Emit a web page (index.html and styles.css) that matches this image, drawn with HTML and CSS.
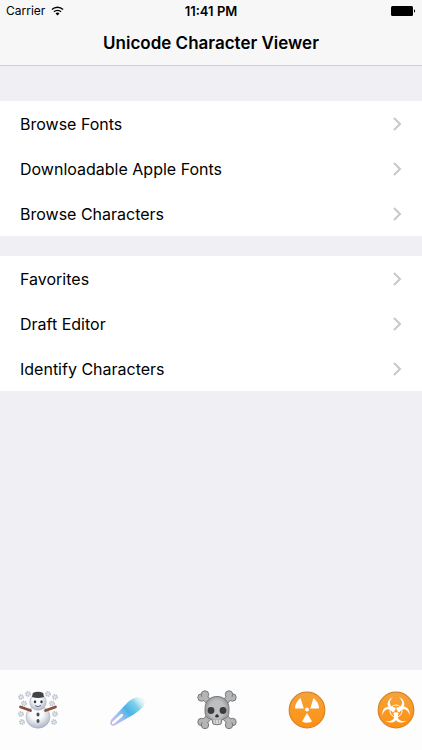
FILE: index.html
```
<!DOCTYPE html>
<html lang="en">
<head>
  <meta charset="UTF-8" />
  <meta name="viewport" content="width=device-width, initial-scale=1.0"/>
  <title>Unicode Character Viewer</title>
  <link rel="stylesheet" href="styles.css">
</head>
<body>

  <header class="header">
    <div class="status-bar">
      <div class="status-left">
        <span>Carrier</span>
        <svg class="wifi" viewBox="0 0 14 10" aria-hidden="true">
          <path d="M1 3.500a8.400 8.400 0 0 1 12 0M3.200 5.900a5.300 5.300 0 0 1 7.600 0" fill="none" stroke="#000" stroke-width="1.500"/>
          <path d="M7 9.800 4.900 7.600a3 3 0 0 1 4.200 0z"/>
        </svg>
      </div>
      <span class="time">11:41 PM</span>
      <div class="status-right">
        <svg class="battery" viewBox="0 0 25 10" aria-hidden="true">
          <rect x="0" y="0" width="22" height="10" rx="1.5"/>
          <path d="M23 3.200a2 2 0 0 1 0 3.600z"/>
        </svg>
      </div>
    </div>
    <h1 class="title">Unicode Character Viewer</h1>
  </header>

  <main class="content">
    <nav class="group">
      <a class="row" href="#fonts">Browse Fonts
        <svg class="chevron" viewBox="0 0 9 14" aria-hidden="true"><path d="M1 1l6 6-6 6"/></svg></a>
      <a class="row" href="#downloadable">Downloadable Apple Fonts
        <svg class="chevron" viewBox="0 0 9 14" aria-hidden="true"><path d="M1 1l6 6-6 6"/></svg></a>
      <a class="row" href="#characters">Browse Characters
        <svg class="chevron" viewBox="0 0 9 14" aria-hidden="true"><path d="M1 1l6 6-6 6"/></svg></a>
    </nav>
    <nav class="group">
      <a class="row" href="#favorites">Favorites
        <svg class="chevron" viewBox="0 0 9 14" aria-hidden="true"><path d="M1 1l6 6-6 6"/></svg></a>
      <a class="row" href="#draft">Draft Editor
        <svg class="chevron" viewBox="0 0 9 14" aria-hidden="true"><path d="M1 1l6 6-6 6"/></svg></a>
      <a class="row" href="#identify">Identify Characters
        <svg class="chevron" viewBox="0 0 9 14" aria-hidden="true"><path d="M1 1l6 6-6 6"/></svg></a>
    </nav>
  </main>

  <footer class="toolbar">
    <button class="emoji" type="button" aria-label="Snowman">
      <svg viewBox="8 10 40 40">
        <defs>
          <radialGradient id="snow" cx=".45" cy=".35" r=".65">
            <stop offset=".4" stop-color="#f8fafd"/>
            <stop offset="1" stop-color="#aeb7c6"/>
          </radialGradient>
        </defs>
        <g fill="#dfe2e8" stroke="#bcc2cc" stroke-width="1.600" stroke-dasharray="1.300 .7">
          <circle cx="18" cy="14" r="2.200"/><circle cx="11" cy="17" r="2.200"/><circle cx="14" cy="23.500" r="2.200"/>
          <circle cx="11" cy="34" r="2.200"/><circle cx="12" cy="42" r="2.200"/>
          <circle cx="38" cy="14" r="2.200"/><circle cx="45" cy="17" r="2.200"/><circle cx="42" cy="23.500" r="2.200"/>
          <circle cx="45" cy="34" r="2.200"/><circle cx="44" cy="42" r="2.200"/>
        </g>
        <ellipse cx="28" cy="37" rx="12" ry="11.200" fill="url(#snow)" stroke="#a4acba" stroke-width=".6"/>
        <circle cx="28" cy="22" r="8.200" fill="url(#snow)" stroke="#a4acba" stroke-width=".6"/>
        <path d="M22 17l.8-4q5.200-2.500 10.400 0l.8 4q-6 2-12 0z" fill="#414347"/>
        <path d="M10.500 27l10 3.500M45.500 27l-10 3.500" stroke="#87503d" stroke-width="2.800" stroke-linecap="round"/>
        <ellipse cx="25" cy="21.800" rx="1.200" ry="1.500" fill="#33363b"/>
        <ellipse cx="31.500" cy="21.800" rx="1.200" ry="1.500" fill="#33363b"/>
        <path d="M25 25.500q3 2.500 6 0" fill="none" stroke="#6b6d75"/>
        <ellipse cx="28" cy="34.500" rx="1.500" ry="1.900" fill="#4a4c52"/>
        <ellipse cx="28" cy="41" rx="1.500" ry="1.900" fill="#4a4c52"/>
      </svg>
    </button>
    <button class="emoji" type="button" aria-label="Comet">
      <svg viewBox="10 10 40 40">
        <defs>
          <linearGradient id="comet" gradientUnits="userSpaceOnUse" x1="13" y1="45" x2="43" y2="19">
            <stop offset="0" stop-color="#d3b4ec"/>
            <stop offset=".3" stop-color="#a3bfee"/>
            <stop offset=".55" stop-color="#4bb3e5"/>
            <stop offset=".8" stop-color="#7fd0e9"/>
            <stop offset="1" stop-color="#d4f1f6" stop-opacity=".5"/>
          </linearGradient>
          <filter id="soft"><feGaussianBlur stdDeviation=".6"/></filter>
        </defs>
        <path d="M13 45q-1.500-2 0-5l17-18q6-5 11-5 7 1 5.500 8-2 3-10 9l-19 11q-3 1.500-4.500 0z" fill="url(#comet)" filter="url(#soft)"/>
        <path d="M15 43l9-8" stroke="#fff" stroke-width="2.500" stroke-linecap="round" filter="url(#soft)"/>
      </svg>
    </button>
    <button class="emoji" type="button" aria-label="Skull and crossbones">
      <svg viewBox="10 10 40 40">
        <defs>
          <radialGradient id="bone" cx=".5" cy=".45" r=".6">
            <stop offset=".5" stop-color="#bebfc1"/>
            <stop offset="1" stop-color="#858688"/>
          </radialGradient>
        </defs>
        <path d="M15 15l30 29M45 15L15 44" stroke="#77787a" stroke-width="6.500"/>
        <g fill="#b4b5b7" stroke="#77787a">
          <circle cx="14.500" cy="17.500" r="3.700"/><circle cx="18" cy="14.500" r="3.700"/>
          <circle cx="45.500" cy="17.500" r="3.700"/><circle cx="42" cy="14.500" r="3.700"/>
          <circle cx="14.500" cy="42" r="3.700"/><circle cx="18" cy="45" r="3.700"/>
          <circle cx="45.500" cy="42" r="3.700"/><circle cx="42" cy="45" r="3.700"/>
        </g>
        <path d="M16 16l28 27M44 16L16 43" stroke="#b4b5b7" stroke-width="5"/>
        <path d="M30 16.500c-8 0-12 6-12 12 0 4 0 8.500 3 9.500l4 1.500 1 4.500q4 1.500 8 0l1-4.500 4-1.500c3-1 3-5.500 3-9.500 0-6-4-12-12-12z" fill="url(#bone)" stroke="#77787a"/>
        <circle cx="24" cy="30.500" r="3.400" fill="#3b3c3e"/>
        <circle cx="36" cy="30.500" r="3.400" fill="#3b3c3e"/>
        <path d="M30 34q-2 1-2 3 2 .8 4 0 0-2-2-3z" fill="#303133"/>
        <path d="M26.500 40h7v3.500q-3.500 1-7 0z" fill="#d5d6d8"/>
        <path d="M28.500 40v3.500M31.500 40v3.500" stroke="#929395" stroke-width=".6"/>
      </svg>
    </button>
    <button class="emoji" type="button" aria-label="Radioactive">
      <svg viewBox="10 10 40 40">
        <defs>
          <linearGradient id="orange" x2="0" y2="1">
            <stop offset="0" stop-color="#f4a33a"/>
            <stop offset="1" stop-color="#ff9012"/>
          </linearGradient>
        </defs>
        <circle cx="30" cy="30" r="17.800" fill="url(#orange)" stroke="#d88326" stroke-width="1.200"/>
        <g fill="#fff">
          <circle cx="30" cy="29.500" r="2"/>
          <path d="M26.800 28.500H18q0-6 5.500-10.500z"/>
          <path d="M33.200 28.500H42q0-6-5.500-10.500z"/>
          <path d="M30 33l-5 8.500q5 2.500 10 0z"/>
        </g>
      </svg>
    </button>
    <button class="emoji" type="button" aria-label="Biohazard">
      <svg viewBox="14 30 40 40">
        <circle cx="34" cy="50" r="17.800" fill="url(#orange)" stroke="#d88326" stroke-width="1.200"/>
        <circle cx="34" cy="51" r="6" fill="none" stroke="#fff"/>
        <g id="horn">
          <path d="M31 37c-7 3-7 10.500-1 13l4 1.500 4-1.500c6-2.500 6-10-1-13 4.500 4 4.500 10.500-3 10.500s-7.500-6.500-3-10.500z" fill="#fff"/>
        </g>
        <use href="#horn" transform="rotate(120 34 51)"/>
        <use href="#horn" transform="rotate(240 34 51)"/>
        <path d="M34 51v-4M34 51l-3.500 2M34 51l3.500 2" stroke="#f79a29" stroke-width="1"/>
        <circle cx="34" cy="51" r="1.500" fill="#f79a29"/>
      </svg>
    </button>
  </footer>

</body>
</html>
```
FILE: styles.css
```
* {
  margin: 0;
  padding: 0;
  box-sizing: border-box;
}
body {
  font-family: Inter, Roboto, sans-serif;
  background: #efeff4;
  color: #000;
  min-height: 100vh;
  display: flex;
  flex-direction: column;
}
.header {
  background: #f7f7f8;
  border-bottom: 1px solid #cfcfd4;
}
.status-bar {
  display: grid;
  grid-template-columns: 1fr auto 1fr;
  align-items: center;
  height: 21px;
  padding: 0 6px;
  font-size: 12px;
}
.status-left {
  display: flex;
  align-items: center;
  gap: 6px;
}
.status-right {
  display: flex;
  justify-content: flex-end;
}
.wifi {
  width: 13px;
  height: 10px;
}
.battery {
  width: 25px;
  height: 10px;
}
.time {
  font-size: 13px;
  font-weight: 600;
}
.title {
  font-size: 17px;
  font-weight: 600;
  line-height: 44px;
  text-align: center;
}
.content {
  flex: 1;
  padding: 35px 0 20px;
  display: flex;
  flex-direction: column;
  gap: 20px;
}
.group {
  background: #fff;
}
.row {
  display: flex;
  align-items: center;
  justify-content: space-between;
  height: 45px;
  padding: 0 20px;
  font-size: 16px;
  color: #000;
  text-decoration: none;
}
.chevron {
  width: 9px;
  height: 14px;
  fill: none;
  stroke: #c7c7cc;
  stroke-width: 2;
}
.toolbar {
  display: flex;
  align-items: center;
  justify-content: space-between;
  height: 80px;
  padding: 0 6px 0 18px;
  background: #fdfdfe;
}
.emoji {
  width: 40px;
  height: 40px;
  border: none;
  background: none;
  cursor: pointer;
}
.emoji svg {
  display: block;
  width: 100%;
  height: 100%;
}
```
